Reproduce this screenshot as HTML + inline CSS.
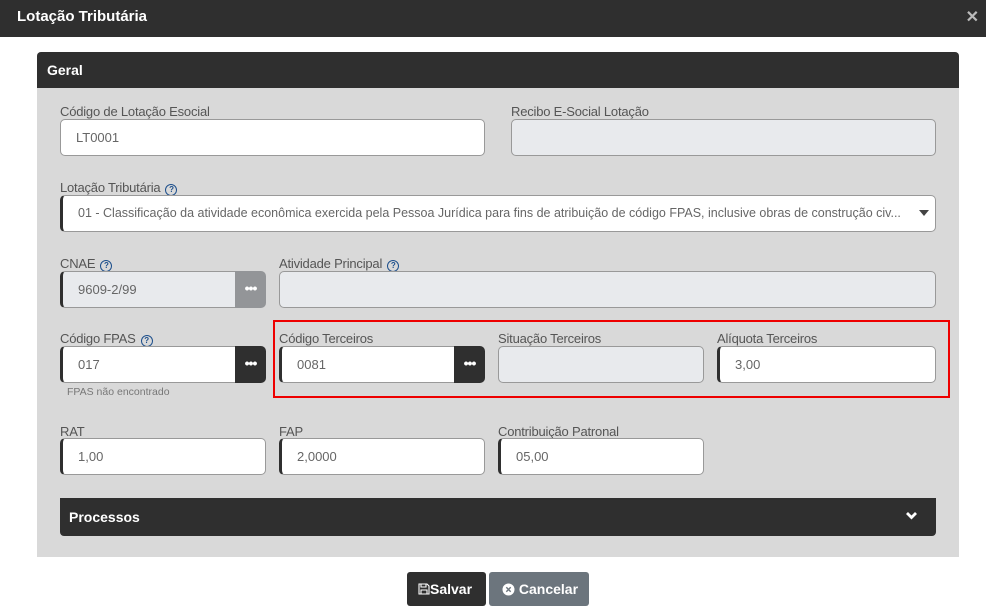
<!DOCTYPE html>
<html><head><meta charset="utf-8"><style>
*{box-sizing:border-box;margin:0;padding:0}
body{width:986px;height:611px;background:#fff;font-family:"Liberation Sans",Roboto,sans-serif;position:relative;overflow:hidden;color:#555}
.abs{position:absolute}
.top{left:0;top:0;width:986px;height:37px;background:#2f2f2f;color:#fff;font-weight:bold;font-size:15px;padding:8px 17px}
.x{right:7px;top:7px;color:#bbb;font-size:16px;font-weight:bold}
.panel{left:37px;top:52px;width:922px;height:505px;background:#d9d9d9;border-radius:4px 4px 0 0;overflow:hidden}
.ph{left:0;top:0;width:922px;height:36px;background:#2f2f2f;color:#fff;font-weight:bold;font-size:14px;padding:10px 10px}
.lbl{font-size:13px;color:#555;letter-spacing:-0.2px}
.in{background:#fff;border:1px solid #999;border-radius:5px;height:37px;font-size:13px;color:#666;padding:10px 15px}
.dl{border-left:3px solid #2f2f2f}
.dis{background:#e8eaed}
.btn{background:#2f2f2f;color:#fff;border-radius:0 5px 5px 0;height:37px;width:31px;font-size:14px;text-align:center;line-height:35px;font-weight:bold;letter-spacing:-1px}
.q{display:inline-block;width:12px;height:12px;border:1.3px solid #1d4f8c;border-radius:50%;font-size:8px;line-height:10px;text-align:center;color:#1d4f8c;font-weight:bold;vertical-align:0px;margin-left:5px}
</style></head><body>
<div class="abs top">Lotação Tributária</div>
<div class="abs x">✕</div>
<div class="abs panel"><div class="abs ph">Geral</div></div>

<div class="abs lbl" style="left:60px;top:104px">Código de Lotação Esocial</div>
<div class="abs in" style="left:60px;top:119px;width:425px">LT0001</div>
<div class="abs lbl" style="left:511px;top:104px">Recibo E-Social Lotação</div>
<div class="abs in dis" style="left:511px;top:119px;width:425px"></div>

<div class="abs lbl" style="left:60px;top:180px">Lotação Tributária<span class="q">?</span></div>
<div class="abs in dl" style="left:60px;top:195px;width:876px;font-size:12.5px;white-space:nowrap;overflow:hidden;padding-right:40px">01 - Classificação da atividade econômica exercida pela Pessoa Jurídica para fins de atribuição de código FPAS, inclusive obras de construção civ...</div>
<div class="abs" style="left:919px;top:210px;width:0;height:0;border-left:5px solid transparent;border-right:5px solid transparent;border-top:6px solid #444"></div>

<div class="abs lbl" style="left:60px;top:256px">CNAE<span class="q">?</span></div>
<div class="abs in dis dl" style="left:60px;top:271px;width:180px;border-radius:5px 0 0 5px">9609-2/99</div>
<div class="abs btn" style="left:235px;top:271px;background:#939598">•••</div>
<div class="abs lbl" style="left:279px;top:256px">Atividade Principal<span class="q">?</span></div>
<div class="abs in dis" style="left:279px;top:271px;width:657px"></div>

<div class="abs lbl" style="left:60px;top:331px">Código FPAS<span class="q">?</span></div>
<div class="abs in dl" style="left:60px;top:346px;width:180px;border-radius:5px 0 0 5px">017</div>
<div class="abs btn" style="left:235px;top:346px">•••</div>
<div class="abs" style="left:67px;top:386px;font-size:10.5px;color:#777">FPAS não encontrado</div>

<div class="abs" style="left:273px;top:320px;width:677px;height:78px;border:2px solid #e00"></div>
<div class="abs lbl" style="left:279px;top:331px">Código Terceiros</div>
<div class="abs in dl" style="left:279px;top:346px;width:180px;border-radius:5px 0 0 5px">0081</div>
<div class="abs btn" style="left:454px;top:346px">•••</div>
<div class="abs lbl" style="left:498px;top:331px">Situação Terceiros</div>
<div class="abs in dis" style="left:498px;top:346px;width:206px"></div>
<div class="abs lbl" style="left:717px;top:331px">Alíquota Terceiros</div>
<div class="abs in dl" style="left:717px;top:346px;width:219px">3,00</div>

<div class="abs lbl" style="left:60px;top:424px">RAT</div>
<div class="abs in dl" style="left:60px;top:438px;width:206px">1,00</div>
<div class="abs lbl" style="left:279px;top:424px">FAP</div>
<div class="abs in dl" style="left:279px;top:438px;width:206px">2,0000</div>
<div class="abs lbl" style="left:498px;top:424px">Contribuição Patronal</div>
<div class="abs in dl" style="left:498px;top:438px;width:206px">05,00</div>

<div class="abs" style="left:60px;top:498px;width:876px;height:38px;background:#2f2f2f;border-radius:0 0 4px 4px;color:#fff;font-weight:bold;font-size:14px;padding:11px 9px">Processos</div>
<svg class="abs" style="left:905px;top:511px" width="13" height="10" viewBox="0 0 13 10"><path d="M2 2l4.5 4.5L11 2" stroke="#fff" stroke-width="2.8" fill="none"/></svg>

<div class="abs" style="left:407px;top:572px;width:79px;height:34px;background:#2f2f2f;border-radius:3px;color:#fff;font-weight:bold;font-size:14px;padding:9px 0 0 11px">
<svg width="12" height="12" viewBox="0 0 12 12" style="vertical-align:-1px"><path d="M1 1h8l2 2v8H1z M3 1v3h5V1 M3 11V7h6v4" stroke="#fff" stroke-width="1.1" fill="none"/></svg>Salvar</div>
<div class="abs" style="left:489px;top:572px;width:100px;height:34px;background:#6c757d;border-radius:3px;color:#fff;font-weight:bold;font-size:14px;padding:9px 0 0 13px">
<svg width="13" height="13" viewBox="0 0 13 13" style="vertical-align:-2px"><circle cx="6.5" cy="6.5" r="6" fill="#fff"/><path d="M4.3 4.3l4.4 4.4M8.7 4.3l-4.4 4.4" stroke="#6c757d" stroke-width="1.4"/></svg> Cancelar</div>
</body></html>
